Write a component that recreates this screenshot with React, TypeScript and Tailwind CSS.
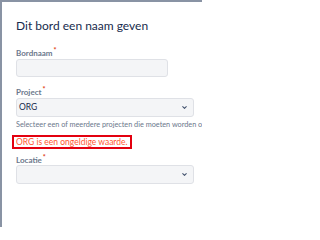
import { ChevronDown } from "lucide-react"

function Label({ text }: { text: string }) {
  return (
    <div className="text-[8px] font-bold leading-[10px] text-[#6b778c]">
      {text}
      <span className="relative -top-[3px] ml-[1px] text-[7px] text-[#de350b]">*</span>
    </div>
  )
}

function Select({ value }: { value?: string }) {
  return (
    <div className="flex h-[19px] w-[178px] items-center justify-between rounded-[3px] border border-[#dfe1e6] bg-[#f4f5f7] pl-[2px] pr-[5px]">
      <span className="text-[8.5px] text-[#172b4d]">{value}</span>
      <ChevronDown className="h-[7px] w-[7px] text-[#42526e]" strokeWidth={3.5} />
    </div>
  )
}

export default function App() {
  return (
    <div
      className="h-[227px] w-[202px] overflow-hidden border-l-2 border-t-2 border-[#8993a4] bg-white"
      style={{ fontFamily: 'Lato, "Liberation Sans", sans-serif' }}
    >
      <div className="flex flex-col pl-[14px]">
        {/* Title */}
        <h1 className="mt-[16px] whitespace-nowrap text-[12px] leading-[15px] text-[#172b4d]">
          Dit bord een naam geven
        </h1>

        {/* Bordnaam */}
        <div className="mt-[15px]">
          <Label text="Bordnaam" />
        </div>
        <div className="mt-[1px] h-[18px] w-[152px] rounded-[3px] border border-[#dfe1e6] bg-[#f4f5f7]" />

        {/* Project */}
        <div className="mt-[10px]">
          <Label text="Project" />
        </div>
        <div className="mt-[1px]">
          <Select value="ORG" />
        </div>
        <p className="mt-[3px] w-[186px] overflow-hidden whitespace-nowrap text-[7.3px] leading-[10px] text-[#6b778c]">
          Selecteer een of meerdere projecten die moeten worden opgenomen
        </p>
        <div className="-ml-[4px] mt-[5px] self-start whitespace-nowrap border-2 border-[#e3000f] pl-[2px] pr-[2px] text-[8.5px] leading-[10px] text-[#ff5630]">
          ORG is een ongeldige waarde.
        </div>

        {/* Locatie */}
        <div className="mt-[6px]">
          <Label text="Locatie" />
        </div>
        <div>
          <Select />
        </div>
      </div>
    </div>
  )
}
